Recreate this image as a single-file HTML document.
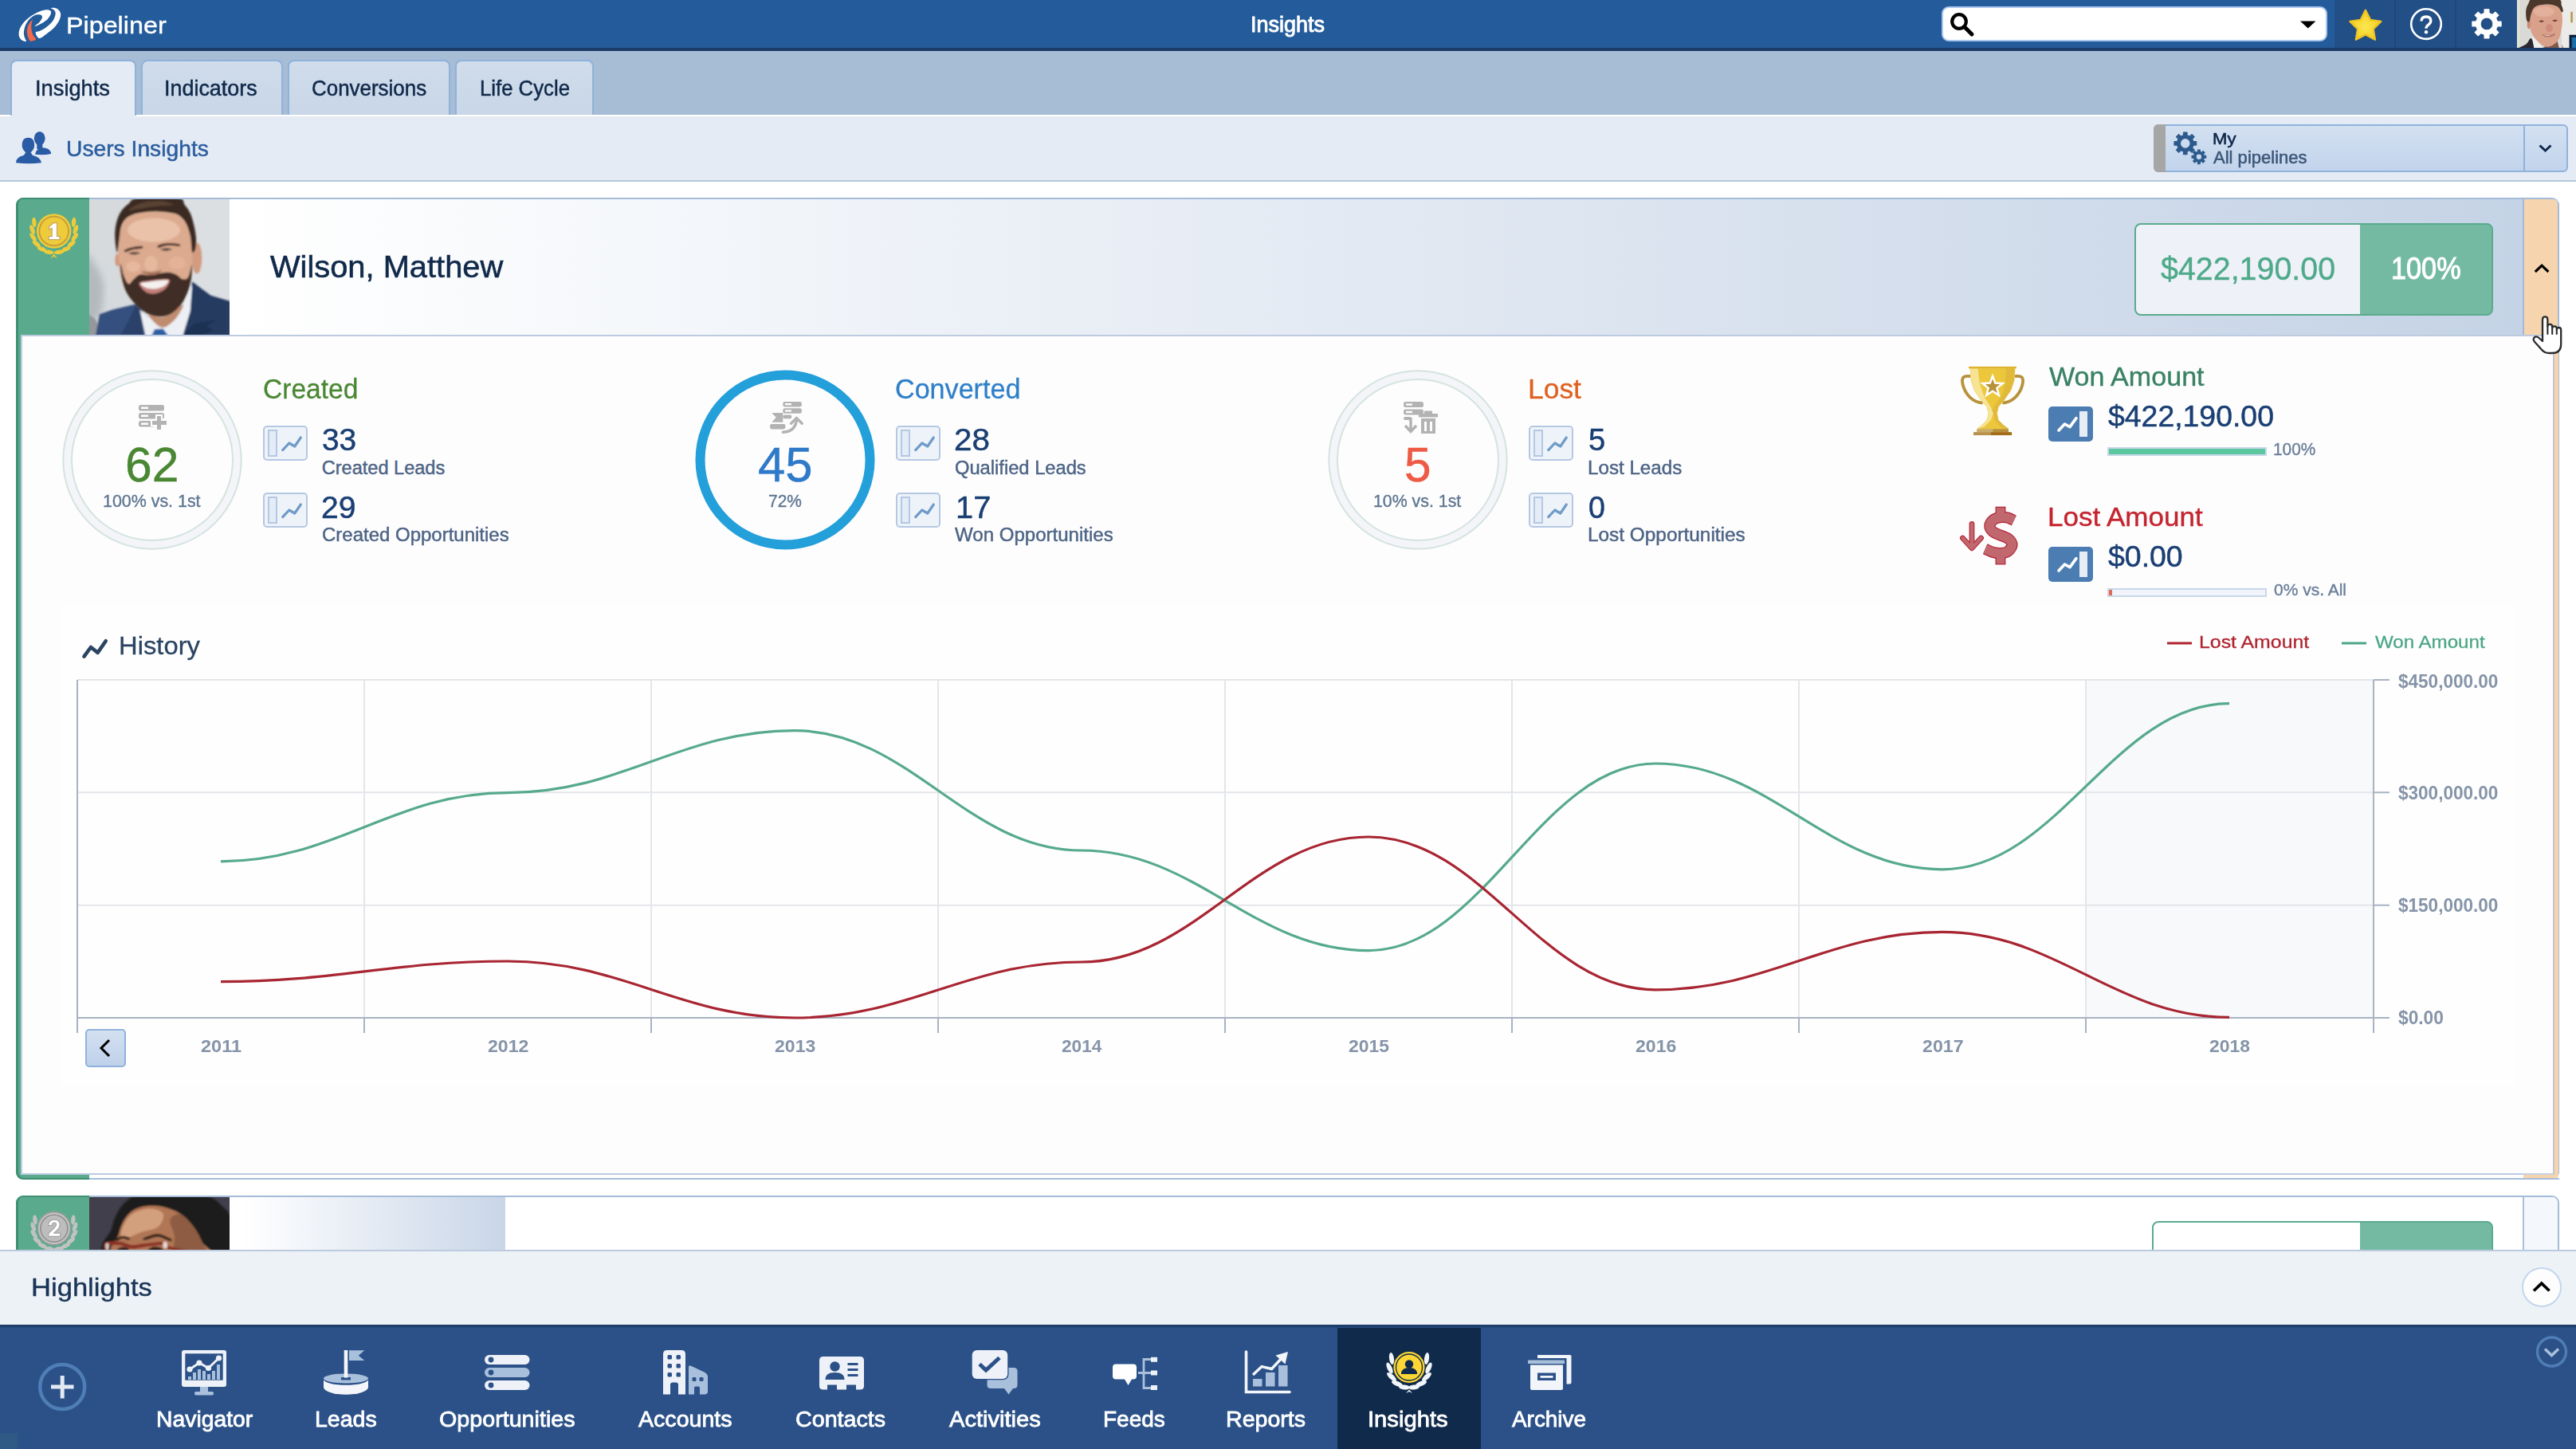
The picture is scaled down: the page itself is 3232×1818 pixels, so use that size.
<!DOCTYPE html>
<html><head><meta charset="utf-8"><title>Insights</title>
<style>
html,body{margin:0;padding:0}
body{width:3232px;height:1818px;position:relative;overflow:hidden;background:#fff;font-family:"Liberation Sans",sans-serif}
.a{position:absolute;box-sizing:border-box}
.t{position:absolute;white-space:nowrap;line-height:1;transform-origin:0 0;font-family:"Liberation Sans",sans-serif}
svg{position:absolute;overflow:visible}
.tab{position:absolute;box-sizing:border-box;top:75px;height:69px;border:2px solid #8fb2dc;border-bottom:none;border-radius:8px 8px 0 0;background:linear-gradient(#d0dcea,#c8d6e7)}
.mb{position:absolute;box-sizing:border-box;width:56px;height:44px;border:2px solid #b5c8e3;border-radius:5px;background:#eef3f9}
.mb i{position:absolute;left:4px;top:3px;width:12px;height:34px;box-sizing:border-box;border:2px solid #b5c8e3;background:#e3ecf7}
.bb{position:absolute;box-sizing:border-box;width:56px;height:44px;border-radius:5px;background:#4b7db2}
.bb i{position:absolute;left:39px;top:6px;width:10px;height:32px;background:#e6edf7}
</style></head><body>
<!-- TOP BAR -->
<div class="a" style="left:0;top:0;width:3232px;height:60px;background:#245c9b"></div>
<div class="a" style="left:2929px;top:0;width:228px;height:60px;background:#234f87"></div>
<div class="a" style="left:3004px;top:0;width:2px;height:60px;background:#1f4679"></div>
<div class="a" style="left:3080px;top:0;width:2px;height:60px;background:#1f4679"></div>
<div class="a" style="left:0;top:60px;width:3232px;height:4px;background:#1b3c69"></div>
<div class="a" style="left:2436px;top:8px;width:484px;height:44px;background:#fff;border:2px solid #a9c7ee;border-radius:9px"></div>
<!-- TAB BAR -->
<div class="a" style="left:0;top:64px;width:3232px;height:80px;background:#a7bcd5"></div>
<div class="a" style="left:0;top:144px;width:3232px;height:2px;background:#fff"></div>
<div class="a" style="left:0;top:146px;width:3232px;height:80px;background:#e5ebf4"></div>
<div class="a" style="left:0;top:226px;width:3232px;height:2px;background:#b4c6da"></div>
<div class="tab" style="left:13px;width:158px;height:70px;background:#e5ebf4"></div>
<div class="a" style="left:15px;top:142px;width:154px;height:6px;background:#e5ebf4"></div>
<div class="tab" style="left:177px;width:178px"></div>
<div class="tab" style="left:360.500px;width:204.500px"></div>
<div class="tab" style="left:570.500px;width:174.500px"></div>
<!-- FILTER DROPDOWN -->
<div class="a" style="left:2702px;top:156px;width:520px;height:60px;border:2px solid #8fb2dc;border-radius:6px;background:linear-gradient(#d3e0f1,#c2d4ec)"></div>
<div class="a" style="left:2702px;top:156px;width:15px;height:60px;background:#a6a6a6;border-radius:6px 0 0 6px"></div>
<div class="a" style="left:3166px;top:158px;width:2px;height:56px;background:#8fb2dc"></div>

<!-- CARD 1 -->
<div class="a" style="left:20px;top:248px;width:3191px;height:1232px;border:2px solid #a5bcd9;border-radius:9px;background:#fdfdfe"></div>
<div class="a" style="left:22px;top:250px;width:3187px;height:170px;background:linear-gradient(90deg,#fff 266px,#c5d3e6 3143px)"></div>
<div class="a" style="left:20px;top:248px;width:92px;height:1232px;background:#3f9072;border-radius:9px 0 0 9px"></div>
<div class="a" style="left:23px;top:250px;width:89px;height:1228px;background:#5aab8d;border-radius:6px 0 0 7px"></div>
<div class="a" style="left:26px;top:420px;width:3181px;height:1054px;background:#fdfdfe;border:2px solid #bccbe0;border-right:none"></div>
<div class="a" style="left:112px;top:1474px;width:3054px;height:4px;background:#fff"></div>
<div class="a" style="left:112px;top:1478px;width:3099px;height:2px;background:#a5bcd9"></div>
<!-- orange strip -->
<div class="a" style="left:3165px;top:250px;width:44px;height:170px;background:#f5d4ae;border-left:2px solid #a3bbd8;border-radius:0 7px 0 0"></div>
<div class="a" style="left:3165px;top:420px;width:40px;height:1054px;background:#fdfdfe;border-right:2px solid #c2c6d3;border-bottom:2px solid #c5d0e0;border-top:2px solid #bccbe0"></div>
<div class="a" style="left:3205px;top:420px;width:4.500px;height:1058px;background:#f5d4ae;border-radius:0 0 5px 0"></div>
<div class="a" style="left:3166px;top:1474px;width:43.500px;height:4px;background:#f5d4ae;border-radius:0 0 6px 0"></div>
<!-- amount box -->
<div class="a" style="left:2678px;top:280px;width:450px;height:116px;border:2.500px solid #5aab8d;border-radius:8px;background:linear-gradient(90deg,#eef2f8 281px,#74baa3 281px)"></div>

<!-- CARD 2 -->
<div class="a" style="left:20px;top:1500px;width:3191px;height:120px;border:2px solid #a5bcd9;border-radius:9px;background:#fff"></div>
<div class="a" style="left:288px;top:1502px;width:346px;height:70px;background:linear-gradient(90deg,#fff 5%,#c9d6e8)"></div>
<div class="a" style="left:20px;top:1500px;width:92px;height:120px;background:#3f9072;border-radius:9px 0 0 9px"></div>
<div class="a" style="left:23px;top:1502px;width:89px;height:118px;background:#5aab8d;border-radius:6px 0 0 7px"></div>
<div class="a" style="left:3165px;top:1502px;width:44px;height:100px;background:#f4f7fb;border-left:2px solid #a9c0dc;border-radius:0 7px 0 0"></div>
<div class="a" style="left:2700px;top:1531.500px;width:428px;height:100px;border:2.500px solid #5aab8d;border-radius:8px;background:linear-gradient(90deg,#fff 259px,#74baa3 259px)"></div>
<!-- HIGHLIGHTS BAR -->
<div class="a" style="left:0;top:1568px;width:3232px;height:94px;background:#edf2f7;border-top:2px solid #bccbde"></div>
<div class="a" style="left:3164px;top:1590px;width:50px;height:50px;border-radius:50%;background:#fdfdfe;border:2px solid #c3d6ee"></div>
<!-- NAV -->
<div class="a" style="left:0;top:1662px;width:3232px;height:156px;background:#2b5188"></div>
<div class="a" style="left:0;top:1662px;width:3232px;height:3px;background:#1e3d6b"></div>
<div class="a" style="left:0;top:1665px;width:3232px;height:1px;background:#284c80"></div>
<div class="a" style="left:1678px;top:1666px;width:180px;height:152px;background:#102a4b"></div>
<div class="a" style="left:0;top:1798px;width:22px;height:20px;background:#2f5a85"></div>
<svg style="left:0;top:0" width="3232" height="1818" viewBox="0 0 3232 1818">
<!-- highlights chevron -->
<path d="M3179,1619.500 l9.800,-9.400 l9.800,9.400" stroke="#000" stroke-width="3.700" fill="none"/>
<!-- nav collapse -->
<circle cx="3201.500" cy="1696" r="18" fill="none" stroke="#4f7db6" stroke-width="3.500"/>
<path d="M3193,1692.500 l8.500,8 l8.500,-8" stroke="#a9c0dc" stroke-width="3.500" fill="none"/>
<!-- plus -->
<circle cx="78.200" cy="1740" r="28" fill="none" stroke="#4f7db6" stroke-width="4.500"/>
<path d="M64,1740 h28.500 M78.200,1726 v28.500" stroke="#e3eaf4" stroke-width="5" fill="none"/>
<!-- Navigator : monitor x 228-284, y 1694-1750 -->
<g>
<rect x="228" y="1694" width="56" height="46" rx="3" fill="#eef2f8"/>
<rect x="232.300" y="1698.300" width="47.400" height="33.400" fill="#2b5188"/>
<g fill="#a9c0dc"><rect x="236" y="1727" width="4" height="4"/><rect x="242" y="1722" width="4" height="9"/><rect x="248" y="1718" width="4" height="13"/><rect x="254" y="1720" width="4" height="11"/><rect x="260" y="1724" width="4" height="7"/><rect x="266" y="1720" width="4" height="11"/><rect x="272" y="1712" width="4" height="19"/>
<rect x="251" y="1740" width="10" height="7"/><rect x="244" y="1746" width="24" height="4.500" rx="2"/></g>
<path d="M238,1718 l12,-8 l11.500,6.500 l13,-12.500" stroke="#eef2f8" stroke-width="3" fill="none"/>
<g fill="#eef2f8"><circle cx="238" cy="1718" r="3.600"/><circle cx="250" cy="1710" r="3.600"/><circle cx="261.500" cy="1716.500" r="3.600"/><circle cx="274.500" cy="1704" r="3.600"/></g>
</g>
<!-- Leads x 406-462 y 1694-1749 -->
<g>
<path d="M406,1732 v8.500 a28,9.200 0 0 0 56,0 v-8.500z" fill="#f4f6fb"/>
<ellipse cx="434" cy="1730.500" rx="28" ry="7.300" fill="#2b5188"/>
<ellipse cx="434" cy="1729.400" rx="28" ry="6" fill="#a9c0dc"/>
<path d="M428,1728 h12 v3.500 h-12z" fill="#2b5188"/>
<rect x="431.700" y="1694" width="4.600" height="34.500" fill="#f4f6fb"/>
<path d="M438,1694.300 h19.300 l-7.500,6.400 l7.500,6.400 h-19.300z" fill="#a9c0dc"/>
</g>
<!-- Opportunities x 608-664.5 y 1700-1744 -->
<g>
<rect x="608" y="1700" width="56.500" height="12" rx="6" fill="#eef2f8"/><rect x="608" y="1716" width="56.500" height="12" rx="6" fill="#a9c0dc"/><rect x="608" y="1732" width="56.500" height="12" rx="6" fill="#eef2f8"/>
<circle cx="616" cy="1706" r="3.400" fill="#2b5188"/><circle cx="616" cy="1722" r="3.400" fill="#2b5188"/><circle cx="616" cy="1738" r="3.400" fill="#2b5188"/>
</g>
<!-- Accounts x 832-888, y 1694-1749.5 -->
<g>
<path d="M832,1749.500 v-50.500 q0,-5 5,-5 h18 q5,0 5,5 v50.500 h-9 v-12 q0,-3 -3,-3 h-4 q-3,0 -3,3 v12z" fill="#eef2f8"/>
<g fill="#2b5188"><rect x="837.500" y="1700" width="5.500" height="5.500" rx="1.500"/><rect x="848.500" y="1700" width="5.500" height="5.500" rx="1.500"/><rect x="837.500" y="1711" width="5.500" height="5.500" rx="1.500"/><rect x="848.500" y="1711" width="5.500" height="5.500" rx="1.500"/><rect x="837.500" y="1722" width="5.500" height="5.500" rx="1.500"/><rect x="848.500" y="1722" width="5.500" height="5.500" rx="1.500"/></g>
<path d="M864,1749.500 v-34 q0,-3 3,-1.800 l17,8 q4,2 4,6 v18 q0,3.800 -4,3.800 h-6 v-8 q0,-2 -2,-2 h-3 q-2,0 -2,2 v8z" fill="#a9c0dc"/>
<g fill="#2b5188"><rect x="868.500" y="1728" width="5" height="5" rx="1.300"/><rect x="877.500" y="1728" width="5" height="5" rx="1.300"/></g>
</g>
<!-- Contacts x 1028-1084 y 1702-1743.5 -->
<g>
<path d="M1033,1702 h46 q5,0 5,5 v32 q0,4.500 -5,4.500 h-5 v-6 h-12 v6 h-12 v-6 h-12 v6 h-5 q-5,0 -5,-4.500 v-32 q0,-5 5,-5z" fill="#eef2f8"/>
<circle cx="1047.500" cy="1714.500" r="6.200" fill="#2b5188"/><path d="M1035.500,1731 q0,-9 12,-9 q12,0 12,9z" fill="#2b5188"/>
<g fill="#2b5188"><rect x="1063.500" y="1710" width="13" height="3"/><rect x="1063.500" y="1717" width="13" height="3"/><rect x="1063.500" y="1724" width="13" height="3"/></g>
</g>
<!-- Activities x 1220-1276 y 1694-1749.5 -->
<g>
<path d="M1239,1716 h33 q4.500,0 4.500,4.500 v17 q0,4.500 -4.500,4.500 h-1 l-5.500,7.500 l-5.500,-7.500 h-17 q-4.500,0 -4.500,-4.500z" fill="#a9c0dc"/>
<rect x="1218.500" y="1692.800" width="47" height="38.500" rx="7" fill="#2b5188"/><rect x="1219.700" y="1694" width="44.500" height="36" rx="6" fill="#eef2f8"/>
<path d="M1229,1711.500 l8,7.500 l17,-15.500" stroke="#2b5188" stroke-width="5" fill="none"/>
</g>
<!-- Feeds x 1396-1452 y 1703-1744 -->
<g>
<path d="M1400,1711.600 h22 q4,0 4,4 v11 q0,4 -4,4 h-2 l-4.500,7.500 l-4.500,-7.500 h-11 q-4,0 -4,-4 v-11 q0,-4 4,-4z" fill="#fff"/>
<path d="M1428,1722.500 h7 M1445,1705.500 h-10 v36 h10 M1435,1722.500 h10" stroke="#a9c0dc" stroke-width="2.800" fill="none"/>
<g fill="#eef2f8"><rect x="1444" y="1702.800" width="8" height="6"/><rect x="1444" y="1719.500" width="8" height="6"/><rect x="1444" y="1738" width="8" height="6"/></g>
</g>
<!-- Reports x 1562-1618 y 1695.500-1748 -->
<g>
<path d="M1563.500,1696 v50.500 h54.500" stroke="#f2f5fa" stroke-width="3.600" fill="none" stroke-linecap="round"/>
<g fill="#a9c0dc"><rect x="1572" y="1730" width="11.500" height="9.500"/><rect x="1588" y="1722" width="11.500" height="17.500"/><rect x="1604" y="1713" width="11.500" height="26.500"/></g>
<path d="M1572,1725 l11,-10.500 l12.500,3 l14,-15" stroke="#f2f5fa" stroke-width="3.400" fill="none"/>
<path d="M1616,1696 l-3.500,15.500 l-12,-11z" fill="#f2f5fa"/>
</g>
<!-- Insights icon : circle c(1768,1715.5) r19.5 -->
<g transform="translate(1768,1715.500)">
<g fill="#f2f5fa">
<ellipse cx="-22" cy="-11" rx="3" ry="7.500" transform="rotate(-8 -22 -11)"/><ellipse cx="-24.500" cy="1" rx="3" ry="7.500" transform="rotate(-25 -24.500 1)"/><ellipse cx="-22" cy="12" rx="3" ry="7.500" transform="rotate(-48 -22 12)"/><ellipse cx="-15" cy="20.500" rx="3" ry="7.500" transform="rotate(-68 -15 20.500)"/><ellipse cx="-6" cy="25" rx="3" ry="7" transform="rotate(-85 -6 25)"/>
<ellipse cx="22" cy="-11" rx="3" ry="7.500" transform="rotate(8 22 -11)"/><ellipse cx="24.500" cy="1" rx="3" ry="7.500" transform="rotate(25 24.500 1)"/><ellipse cx="22" cy="12" rx="3" ry="7.500" transform="rotate(48 22 12)"/><ellipse cx="15" cy="20.500" rx="3" ry="7.500" transform="rotate(68 15 20.500)"/><ellipse cx="6" cy="25" rx="3" ry="7" transform="rotate(85 6 25)"/>
<path d="M-4,32.500 l4,-4.500 l4,4.500 l-4,-2z"/>
</g>
<circle r="19.500" fill="#fbd634"/><circle r="16.500" fill="none" stroke="#102a4b" stroke-width="1.300"/>
<circle cx="0" cy="-4" r="5.200" fill="#102a4b"/><path d="M-10,8.500 q0,-8 10,-8 q10,0 10,8z" fill="#102a4b"/>
</g>
<!-- Archive x 1917-1971.5 y 1700-1744 -->
<g>
<path d="M1929,1700 h41 q1.500,0 1.500,1.500 v33 q0,2 -2,2 h-4 v-32.500 h-36.500z" fill="#f2f5fa"/>
<rect x="1917" y="1706.500" width="46" height="4.500" rx="1" fill="#a9c0dc"/>
<path d="M1920,1712.500 h41 v29.500 q0,2 -2,2 h-37 q-2,0 -2,-2z" fill="#f2f5fa"/>
<rect x="1929" y="1722.500" width="23" height="9.500" fill="#2b5188"/><rect x="1932.500" y="1726" width="16" height="2.800" fill="#f2f5fa"/>
</g>
</svg>

<!-- TOP ICONS -->
<svg style="left:0;top:0" width="3232" height="1818" viewBox="0 0 3232 1818">
<defs><radialGradient id="sg" cx="50%" cy="55%" r="55%"><stop offset="0" stop-color="#fbe84e"/><stop offset="1" stop-color="#f3cb22"/></radialGradient><filter id="b1" x="-5%" y="-5%" width="110%" height="110%"><feGaussianBlur stdDeviation="1.1"/></filter><filter id="b3" x="-20%" y="-20%" width="140%" height="140%"><feGaussianBlur stdDeviation="4"/></filter><filter id="b2" x="-5%" y="-5%" width="110%" height="110%"><feGaussianBlur stdDeviation="0.7"/></filter><clipPath id="cp1"><rect x="112" y="250" width="176" height="170"/></clipPath><clipPath id="cpa"><rect x="3158" y="0" width="74" height="60"/></clipPath><clipPath id="cp2"><rect x="112" y="1502" width="176" height="66"/></clipPath><clipPath id="cpm2"><rect x="22" y="1502" width="90" height="66"/></clipPath></defs>
<path d="M32.77,52.06 C32.02,52.31 28.67,51.38 27.18,50.20 C25.69,49.02 24.26,47.22 23.82,44.98 C23.39,42.75 23.51,39.64 24.57,36.79 C25.62,33.93 27.74,30.64 30.16,27.85 C32.58,25.05 35.87,22.26 39.10,20.02 C42.33,17.79 46.37,15.74 49.53,14.43 C52.70,13.13 55.87,12.38 58.10,12.20 C60.34,12.01 61.95,12.63 62.94,13.31 C63.94,14.00 64.25,14.99 64.06,16.30 C63.88,17.60 63.01,19.46 61.83,21.14 C60.65,22.82 59.03,24.74 56.98,26.35 C54.93,27.97 51.77,29.71 49.53,30.83 C47.30,31.94 43.57,33.56 43.57,33.06 C43.57,32.56 48.04,29.46 49.53,27.85 C51.02,26.23 51.95,24.62 52.51,23.37 C53.07,22.13 53.20,21.20 52.89,20.39 C52.57,19.59 51.64,18.87 50.65,18.53 C49.66,18.19 48.35,18.10 46.92,18.34 C45.50,18.59 43.76,19.06 42.08,20.02 C40.40,20.98 38.48,22.32 36.86,24.12 C35.25,25.92 33.51,28.47 32.39,30.83 C31.28,33.19 30.53,36.04 30.16,38.28 C29.79,40.51 29.91,42.50 30.16,44.24 C30.41,45.98 31.21,47.41 31.65,48.71 C32.08,50.01 33.51,51.81 32.77,52.06Z" fill="#fff"/>
<path d="M64.06,10.33 C64.19,9.84 67.35,9.65 68.91,9.96 C70.46,10.27 72.20,11.08 73.38,12.20 C74.56,13.31 75.61,15.05 75.99,16.67 C76.36,18.28 76.17,19.90 75.61,21.88 C75.05,23.87 74.00,26.35 72.63,28.59 C71.27,30.83 69.53,33.19 67.42,35.30 C65.30,37.41 62.94,39.15 59.96,41.26 C56.98,43.37 52.08,48.03 49.53,47.96 C46.99,47.90 44.69,42.38 44.69,40.89 C44.69,39.39 47.48,40.02 49.53,39.02 C51.58,38.03 54.62,36.54 56.98,34.92 C59.34,33.31 61.83,31.38 63.69,29.34 C65.55,27.29 67.17,24.74 68.16,22.63 C69.15,20.52 69.65,18.28 69.65,16.67 C69.65,15.05 69.09,14.00 68.16,12.94 C67.23,11.89 63.94,10.83 64.06,10.33Z" fill="#fff"/>
<path d="M40.96,24.49 C40.43,24.74 37.98,27.47 36.86,29.34 C35.75,31.20 34.75,33.68 34.26,35.67 C33.76,37.66 33.70,39.39 33.88,41.26 C34.07,43.12 34.63,45.11 35.37,46.85 C36.12,48.59 36.74,51.26 38.35,51.69 C39.97,52.12 44.44,50.57 45.06,49.45 C45.68,48.34 42.95,46.66 42.08,44.98 C41.21,43.31 40.31,41.38 39.85,39.39 C39.38,37.41 39.26,34.99 39.29,33.06 C39.32,31.14 39.75,29.27 40.03,27.85 C40.31,26.42 41.49,24.24 40.96,24.49Z" fill="#f4694a"/>
<circle cx="2458" cy="27" r="8.800" fill="none" stroke="#000" stroke-width="4.200"/><path d="M2464.500,33.500 L2474,43" stroke="#000" stroke-width="5" stroke-linecap="round"/>
<path d="M2886,26.500 h19.500 l-9.750,9z" fill="#000"/>
<path d="M2967.90,12.80 L2973.95,24.87 L2987.30,26.90 L2977.70,36.38 L2979.89,49.70 L2967.90,43.50 L2955.91,49.70 L2958.10,36.38 L2948.50,26.90 L2961.85,24.87Z" fill="url(#sg)" stroke="#eec521" stroke-width="2.400" stroke-linejoin="round"/>
<circle cx="3044" cy="30.100" r="18.800" fill="none" stroke="#fff" stroke-width="2.600"/>
<path d="M3038,26.600 q0,-5.600 5.900,-5.600 q5.900,0 5.900,5.100 q0,3 -3,5 q-2.800,1.900 -2.800,4.700" fill="none" stroke="#fff" stroke-width="3.300"/><circle cx="3044" cy="40.300" r="2.200" fill="#fff"/>
<path d="M3117.03,16.63 L3117.11,11.83 L3122.89,11.83 L3122.97,16.63 L3127.29,18.42 L3130.74,15.08 L3134.82,19.16 L3131.48,22.61 L3133.27,26.93 L3138.07,27.01 L3138.07,32.79 L3133.27,32.87 L3131.48,37.19 L3134.82,40.64 L3130.74,44.72 L3127.29,41.38 L3122.97,43.17 L3122.89,47.97 L3117.11,47.97 L3117.03,43.17 L3112.71,41.38 L3109.26,44.72 L3105.18,40.64 L3108.52,37.19 L3106.73,32.87 L3101.93,32.79 L3101.93,27.01 L3106.73,26.93 L3108.52,22.61 L3105.18,19.16 L3109.26,15.08 L3112.71,18.42Z M3112.00,29.90 a8.0,8.0 0 1,0 16.0,0 a8.0,8.0 0 1,0 -16.0,0Z" fill="#fff" fill-rule="evenodd" stroke="#fff" stroke-width="1.2" stroke-linejoin="round"/>
<path d="M2739.53,169.75 L2739.59,166.08 L2744.01,166.08 L2744.07,169.75 L2747.37,171.12 L2750.01,168.56 L2753.14,171.69 L2750.58,174.33 L2751.95,177.63 L2755.62,177.69 L2755.62,182.11 L2751.95,182.17 L2750.58,185.47 L2753.14,188.11 L2750.01,191.24 L2747.37,188.68 L2744.07,190.05 L2744.01,193.72 L2739.59,193.72 L2739.53,190.05 L2736.23,188.68 L2733.59,191.24 L2730.46,188.11 L2733.02,185.47 L2731.65,182.17 L2727.98,182.11 L2727.98,177.69 L2731.65,177.63 L2733.02,174.33 L2730.46,171.69 L2733.59,168.56 L2736.23,171.12Z M2735.40,179.90 a6.4,6.4 0 1,0 12.8,0 a6.4,6.4 0 1,0 -12.8,0Z" fill="#2d5a8c" fill-rule="evenodd" stroke="#2d5a8c" stroke-width="1.2" stroke-linejoin="round"/>
<path d="M2757.48,190.46 L2757.50,188.01 L2760.30,188.01 L2760.32,190.46 L2762.38,191.31 L2764.12,189.59 L2766.11,191.58 L2764.39,193.32 L2765.24,195.38 L2767.69,195.40 L2767.69,198.20 L2765.24,198.22 L2764.39,200.28 L2766.11,202.02 L2764.12,204.01 L2762.38,202.29 L2760.32,203.14 L2760.30,205.59 L2757.50,205.59 L2757.48,203.14 L2755.42,202.29 L2753.68,204.01 L2751.69,202.02 L2753.41,200.28 L2752.56,198.22 L2750.11,198.20 L2750.11,195.40 L2752.56,195.38 L2753.41,193.32 L2751.69,191.58 L2753.68,189.59 L2755.42,191.31Z M2755.10,196.80 a3.8,3.8 0 1,0 7.6,0 a3.8,3.8 0 1,0 -7.6,0Z" fill="#2d5a8c" fill-rule="evenodd" stroke="#2d5a8c" stroke-width="1.2" stroke-linejoin="round"/>
<path d="M3186.500,182.500 l7,6.500 l7,-6.500" stroke="#10294a" stroke-width="3" fill="none"/>
<path d="M3180.800,341 l8.300,-7.800 l8.300,7.800" stroke="#000" stroke-width="3.100" fill="none"/>
<g fill="#2a5ca6"><ellipse cx="49.700" cy="173.600" rx="6.900" ry="8.600"/><rect x="46.300" y="179" width="7" height="8"/><path d="M44,193.800 q1,-7.600 9,-8.600 q9.500,0.600 11,6.200 v1.500 q-8,2 -20,0.900z"/><g stroke="#e5ebf4" stroke-width="1.800" paint-order="stroke"><path d="M20,204.300 q0,-7.500 10,-9.600 l2.200,-3.500 q-4.600,-4.200 -4.600,-9 q0,-9.400 7.800,-9.400 q7.800,0 7.800,9.400 q0,4.800 -4.600,9 l2.200,3.500 q10,2.100 11.200,9.600 q-16,2 -32,0z"/></g></g>
<g clip-path="url(#cpa)"><rect x="3158" y="0" width="74" height="60" fill="#d9dad6"/><rect x="3158" y="0" width="3" height="60" fill="#e8e4d4"/><rect x="3214" y="0" width="18" height="60" fill="#ecebe8"/><g filter="url(#b2)">
<rect x="3225.3" y="14.6" width="2.600" height="14" rx="1.300" fill="#b59a55"/>
<path d="M3223.55,43.73 L3232.83,43.73 L3232.83,61.84 L3223.55,61.84Z" fill="#0e1e36"/><path d="M3226.65,46.82 L3232.83,46.82 L3232.83,61.84 L3226.65,61.84Z" fill="#1c6ea8"/>
<path d="M3158.63,61.84 C3156.86,60.73 3166.80,57.49 3169.67,55.21 C3172.54,52.93 3174.08,47.04 3175.85,48.14 C3177.62,49.25 3183.14,59.56 3180.27,61.84 C3177.40,64.12 3160.39,62.94 3158.63,61.84Z" fill="#2a2730"/>
<path d="M3176.51,45.94 L3179.61,61.84 L3191.75,61.84 L3182.92,50.80Z" fill="#f1eff0"/>
<path d="M3207.21,50.80 C3210.45,51.68 3218.33,60.00 3215.60,61.84 C3212.88,63.68 3194.11,62.72 3190.87,61.84 C3187.63,60.95 3193.45,58.38 3196.17,56.54 C3198.89,54.70 3203.97,49.91 3207.21,50.80Z" fill="#7d5a4c"/>
<path d="M3208.54,50.80 L3211.19,61.84 L3215.60,61.84 L3212.95,54.33Z" fill="#e6dedb"/>
<path d="M3173.20,26.50 C3173.42,23.93 3174.38,20.47 3175.41,17.67 C3176.44,14.87 3177.40,11.63 3179.39,9.72 C3181.37,7.80 3183.80,6.85 3187.34,6.18 C3190.87,5.52 3196.91,5.30 3200.59,5.74 C3204.27,6.18 3207.21,7.36 3209.42,8.83 C3211.63,10.31 3212.92,11.63 3213.84,14.58 C3214.76,17.52 3215.05,22.31 3214.94,26.50 C3214.83,30.70 3214.10,35.70 3213.17,39.75 C3212.25,43.80 3211.52,47.78 3209.42,50.80 C3207.32,53.81 3203.53,56.68 3200.59,57.86 C3197.64,59.04 3194.70,59.04 3191.75,57.86 C3188.81,56.68 3185.42,53.45 3182.92,50.80 C3180.42,48.14 3178.21,44.91 3176.73,41.96 C3175.26,39.02 3174.67,35.70 3174.08,33.13 C3173.50,30.55 3172.98,29.08 3173.20,26.50Z" fill="#d9a08a"/>
<ellipse cx="3191.8" cy="14.6" rx="13" ry="6.500" fill="#e3b09b"/>
<ellipse cx="3172.8" cy="30.5" rx="2.200" ry="6" fill="#c98d78"/>
<path d="M3170.11,25.18 C3169.41,22.89 3168.86,16.71 3169.23,13.25 C3169.59,9.79 3170.77,6.85 3172.32,4.42 C3173.86,1.99 3172.32,-0.37 3178.50,-1.33 C3184.69,-2.28 3203.53,-2.65 3209.42,-1.33 C3215.31,0.00 3212.77,4.20 3213.84,6.63 C3214.90,9.05 3215.79,11.85 3215.83,13.25 C3215.86,14.65 3215.13,15.75 3214.06,15.02 C3212.99,14.28 3211.67,10.38 3209.42,8.83 C3207.18,7.29 3204.27,6.18 3200.59,5.74 C3196.91,5.30 3190.87,5.52 3187.34,6.18 C3183.80,6.85 3181.34,7.80 3179.39,9.72 C3177.43,11.63 3176.62,14.80 3175.63,17.67 C3174.64,20.54 3174.34,25.69 3173.42,26.94 C3172.50,28.19 3170.81,27.46 3170.11,25.18Z" fill="#4b372c"/>
<path d="M3185.57,26.50 C3185.57,26.06 3187.63,25.40 3188.66,25.40 C3189.69,25.40 3191.75,26.06 3191.75,26.50 C3191.75,26.94 3189.69,28.05 3188.66,28.05 C3187.63,28.05 3185.57,26.94 3185.57,26.50Z" fill="#6a4638"/><path d="M3202.35,25.84 C3202.35,25.43 3204.34,24.77 3205.45,24.73 C3206.55,24.70 3208.98,25.21 3208.98,25.62 C3208.98,26.02 3206.55,27.13 3205.45,27.16 C3204.34,27.20 3202.35,26.24 3202.35,25.84Z" fill="#6a4638"/>
<ellipse cx="3198.4" cy="35.3" rx="4.500" ry="5" fill="#cf8c7c"/>
<path d="M3189.54,43.07 C3190.28,42.77 3193.52,43.84 3196.17,43.73 C3198.82,43.62 3204.34,42.11 3205.45,42.40 C3206.55,42.70 3204.34,44.83 3202.80,45.49 C3201.25,46.16 3198.01,46.38 3196.17,46.38 C3194.33,46.38 3192.86,46.05 3191.75,45.49 C3190.65,44.94 3188.81,43.36 3189.54,43.07Z" fill="#b57768"/><path d="M3191.75,43.73 C3191.75,43.58 3194.26,44.15 3196.17,44.08 C3198.08,44.01 3203.24,43.14 3203.24,43.29 C3203.24,43.43 3198.08,44.89 3196.17,44.96 C3194.26,45.04 3191.75,43.88 3191.75,43.73Z" fill="#ead9d2"/>
</g></g>
<ellipse cx="42.85" cy="278.84" rx="2.7" ry="6.2" transform="rotate(-5.0 42.85 278.84)" fill="#eecb3a"/><ellipse cx="40.56" cy="288.05" rx="2.7" ry="6.2" transform="rotate(-20.7 40.56 288.05)" fill="#eecb3a"/><ellipse cx="41.58" cy="297.49" rx="2.7" ry="6.2" transform="rotate(-36.4 41.58 297.49)" fill="#eecb3a"/><ellipse cx="45.78" cy="306.00" rx="2.7" ry="6.2" transform="rotate(-52.0 45.78 306.00)" fill="#eecb3a"/><ellipse cx="52.65" cy="312.56" rx="2.7" ry="6.2" transform="rotate(-67.7 52.65 312.56)" fill="#eecb3a"/><ellipse cx="61.35" cy="316.35" rx="2.7" ry="6.2" transform="rotate(-83.4 61.35 316.35)" fill="#eecb3a"/><ellipse cx="92.55" cy="278.84" rx="2.7" ry="6.2" transform="rotate(5.0 92.55 278.84)" fill="#eecb3a"/><ellipse cx="94.84" cy="288.05" rx="2.7" ry="6.2" transform="rotate(20.7 94.84 288.05)" fill="#eecb3a"/><ellipse cx="93.82" cy="297.49" rx="2.7" ry="6.2" transform="rotate(36.4 93.82 297.49)" fill="#eecb3a"/><ellipse cx="89.62" cy="306.00" rx="2.7" ry="6.2" transform="rotate(52.0 89.62 306.00)" fill="#eecb3a"/><ellipse cx="82.75" cy="312.56" rx="2.7" ry="6.2" transform="rotate(67.7 82.75 312.56)" fill="#eecb3a"/><ellipse cx="74.05" cy="316.35" rx="2.7" ry="6.2" transform="rotate(83.4 74.05 316.35)" fill="#eecb3a"/><path d="M63.5,324.29999999999995 l4.200,-6 l4.200,6 l-4.200,-2.600z" fill="#eecb3a"/>
<circle cx="67.700" cy="289.900" r="21.700" fill="#eecb3a"/><circle cx="67.700" cy="289.900" r="18.300" fill="none" stroke="#c29a3a" stroke-width="1.700"/>
<path d="M61.500,284.500 l5.500,-4.800 h4.500 v17 h3.600 v4 h-14 v-4 h4 v-10.500 l-3.600,2z" fill="#fff" stroke="#c7a763" stroke-width="1.300" stroke-linejoin="round"/>
<g clip-path="url(#cp1)"><rect x="112" y="250" width="176" height="170" fill="#d6dadd"/><rect x="230" y="250" width="58" height="170" fill="#dcdfe2"/><path d="M107.31,325.09 C109.26,309.45 115.32,327.05 119.04,332.13 C122.76,337.21 128.23,345.82 129.60,355.60 C130.97,365.37 129.01,382.97 127.25,390.80 C125.49,398.62 122.36,396.66 119.04,402.53 C115.72,408.39 109.26,438.90 107.31,425.99 C105.35,413.09 105.35,340.73 107.31,325.09Z" fill="#b4b9be" filter="url(#b3)"/><path d="M107.31,396.66 C109.26,392.36 116.11,397.25 119.04,400.18 C121.97,403.12 124.52,409.96 124.91,414.26 C125.30,418.56 124.32,424.04 121.39,425.99 C118.45,427.95 109.65,430.88 107.31,425.99 C104.96,421.11 105.35,400.96 107.31,396.66Z" fill="#94989c" filter="url(#b1)"/><g filter="url(#b1)">
<path d="M120.21,421.30 L124.91,394.32 L141.33,388.45 L170.66,381.41 L178.88,390.80 L183.57,421.30Z" fill="#34507e"/>
<path d="M150.72,421.30 L161.28,402.53 L170.66,382.58 L178.88,390.80 L183.57,421.30Z" fill="#2a426b"/>
<path d="M210.56,421.30 L229.33,396.66 L239.89,373.20 L241.06,353.25 L264.53,370.85 L289.17,377.89 L289.17,421.30Z" fill="#263b61"/>
<path d="M229.33,421.30 L243.41,406.05 L271.57,401.36 L258.66,409.57 L268.05,414.26 L252.80,421.30Z" fill="#1f3152"/>
<path d="M175.36,388.45 L182.40,421.30 L229.33,421.30 L238.72,390.80 L241.06,357.94 L229.33,384.93 L205.86,402.53 L184.74,397.84Z" fill="#eceff4"/>
<path d="M190.02,421.30 L194.13,413.09 L204.69,412.50 L211.14,421.30Z" fill="#2f5fa3"/>
<path d="M187.09,394.32 C189.05,393.14 198.82,399.79 205.86,397.84 C212.90,395.88 226.79,382.39 229.33,382.58 C231.87,382.78 225.03,394.32 221.12,399.01 C217.21,403.70 210.36,409.76 205.86,410.74 C201.37,411.72 197.26,407.61 194.13,404.88 C191.00,402.14 185.14,395.49 187.09,394.32Z" fill="#c08c70"/>
<ellipse cx="246.9" cy="323.9" rx="6.500" ry="19.500" fill="#d39b80"/>
<ellipse cx="147.4" cy="326.3" rx="3" ry="8" fill="#cf977c"/>
<path d="M148.37,315.70 C148.37,310.23 148.86,304.56 149.55,299.28 C150.23,294.00 150.91,288.33 152.48,284.03 C154.04,279.72 155.51,276.20 158.93,273.47 C162.35,270.73 167.14,268.97 173.01,267.60 C178.88,266.23 186.70,265.25 194.13,265.25 C201.56,265.25 212.02,266.33 217.60,267.60 C223.17,268.87 224.73,270.43 227.57,272.88 C230.41,275.32 232.65,278.26 234.61,282.27 C236.56,286.27 238.23,291.36 239.30,296.93 C240.38,302.50 240.87,308.86 241.06,315.70 C241.26,322.55 241.26,330.37 240.48,338.00 C239.69,345.62 238.62,354.03 236.37,361.46 C234.12,368.89 230.50,377.30 226.98,382.58 C223.46,387.86 219.55,390.70 215.25,393.14 C210.95,395.59 206.25,397.25 201.17,397.25 C196.09,397.25 189.83,395.59 184.74,393.14 C179.66,390.70 174.97,386.88 170.66,382.58 C166.36,378.28 161.96,372.80 158.93,367.33 C155.90,361.85 154.04,355.60 152.48,349.73 C150.91,343.86 150.23,337.80 149.55,332.13 C148.86,326.46 148.37,321.18 148.37,315.70Z" fill="#dcaa8e"/>
<ellipse cx="193.0" cy="288.7" rx="33" ry="15" fill="#e9c2a9"/>
<ellipse cx="167.1" cy="334.5" rx="9" ry="7" fill="#e6b89e"/><ellipse cx="222.3" cy="329.8" rx="11" ry="8" fill="#e3b297"/>
<path d="M146.96,316.88 C146.05,316.49 144.42,303.19 144.27,296.93 C144.11,290.67 144.75,284.61 146.03,279.33 C147.30,274.05 149.35,269.16 151.89,265.25 C154.43,261.34 157.76,258.60 161.28,255.87 C164.80,253.13 162.65,250.00 173.01,248.83 C183.38,247.65 213.69,247.46 223.46,248.83 C233.24,250.20 229.13,253.91 231.68,257.04 C234.22,260.17 236.76,263.30 238.72,267.60 C240.67,271.90 242.20,277.57 243.41,282.85 C244.62,288.13 245.70,294.39 245.99,299.28 C246.28,304.17 245.99,309.35 245.17,312.18 C244.35,315.02 242.10,318.83 241.06,316.29 C240.03,313.75 240.08,302.66 238.95,296.93 C237.82,291.20 236.21,285.98 234.26,281.91 C232.30,277.85 229.99,274.91 227.22,272.53 C224.44,270.14 223.11,268.81 217.60,267.60 C212.08,266.39 201.56,265.25 194.13,265.25 C186.70,265.25 178.88,266.23 173.01,267.60 C167.14,268.97 162.41,270.73 158.93,273.47 C155.45,276.20 153.65,279.72 152.13,284.03 C150.60,288.33 150.64,293.80 149.78,299.28 C148.92,304.75 147.88,317.27 146.96,316.88Z" fill="#3b2a22"/>
<path d="M161.28,264.08 C160.50,263.10 171.06,256.65 177.70,254.69 C184.35,252.74 194.52,251.96 201.17,252.35 C207.82,252.74 217.60,256.06 217.60,257.04 C217.60,258.02 207.04,257.63 201.17,258.21 C195.30,258.80 189.05,259.58 182.40,260.56 C175.75,261.54 162.06,265.06 161.28,264.08Z" fill="#5a4233"/>
<path d="M150.72,332.13 C150.82,334.67 151.70,343.86 153.07,349.73 C154.43,355.60 156.00,361.85 158.93,367.33 C161.87,372.80 166.36,378.28 170.66,382.58 C174.97,386.88 179.66,390.70 184.74,393.14 C189.83,395.59 196.09,397.25 201.17,397.25 C206.25,397.25 210.95,395.59 215.25,393.14 C219.55,390.70 223.66,386.88 226.98,382.58 C230.31,378.28 233.05,372.80 235.20,367.33 C237.35,361.85 238.95,355.60 239.89,349.73 C240.83,343.86 241.41,332.52 240.83,332.13 C240.24,331.74 238.29,344.35 236.37,347.38 C234.45,350.41 231.87,350.81 229.33,350.32 C226.79,349.83 224.05,345.88 221.12,344.45 C218.18,343.02 215.05,342.05 211.73,341.75 C208.41,341.46 205.28,342.10 201.17,342.69 C197.06,343.28 191.39,344.98 187.09,345.27 C182.79,345.56 178.68,343.51 175.36,344.45 C172.03,345.39 169.49,348.95 167.14,350.90 C164.80,352.86 163.23,356.97 161.28,356.18 C159.32,355.40 156.88,349.83 155.41,346.21 C153.95,342.59 153.26,336.82 152.48,334.48 C151.70,332.13 150.62,329.59 150.72,332.13Z" fill="#3f2d26"/>
<path d="M174.77,355.01 C175.94,352.86 183.08,352.86 188.26,352.08 C193.45,351.29 201.76,350.36 205.86,350.32 C209.97,350.28 212.51,349.98 212.90,351.84 C213.29,353.70 210.56,358.88 208.21,361.46 C205.86,364.04 201.95,366.16 198.82,367.33 C195.70,368.50 192.37,368.89 189.44,368.50 C186.50,368.11 183.67,367.23 181.22,364.98 C178.78,362.73 173.60,357.16 174.77,355.01Z" fill="#c47f78"/>
<path d="M176.53,355.60 C177.51,354.38 183.38,354.15 188.26,353.48 C193.15,352.82 201.99,351.80 205.86,351.61 C209.74,351.41 211.50,351.06 211.50,352.31 C211.50,353.56 208.76,357.43 205.86,359.12 C202.97,360.80 198.04,362.13 194.13,362.40 C190.22,362.68 185.33,361.89 182.40,360.76 C179.46,359.62 175.55,356.81 176.53,355.60Z" fill="#f4f1ef"/>
<path d="M177.12,340.34 C176.73,340.83 180.25,343.04 182.40,343.86 C184.55,344.68 187.48,345.31 190.02,345.27 C192.57,345.23 195.50,344.65 197.65,343.63 C199.80,342.61 203.52,339.62 202.93,339.17 C202.34,338.72 197.16,340.64 194.13,340.93 C191.10,341.22 187.58,341.03 184.74,340.93 C181.91,340.83 177.51,339.85 177.12,340.34Z" fill="#a9745c"/>
<ellipse cx="189.4" cy="331.0" rx="8" ry="10" fill="#e6b99f"/>
<path d="M156.00,313.94 C157.17,312.97 161.18,311.30 164.80,310.42 C168.42,309.54 175.46,308.47 177.70,308.66 C179.95,308.86 180.25,310.82 178.29,311.60 C176.34,312.38 169.39,312.58 165.97,313.36 C162.55,314.14 159.42,316.19 157.76,316.29 C156.10,316.39 154.83,314.92 156.00,313.94Z" fill="#3f2c25"/>
<path d="M198.24,308.08 C199.70,307.10 204.01,305.48 208.21,305.14 C212.41,304.81 220.63,305.50 223.46,306.08 C226.30,306.67 227.57,308.33 225.22,308.66 C222.88,309.00 213.69,307.69 209.38,308.08 C205.08,308.47 201.27,311.01 199.41,311.01 C197.55,311.01 196.77,309.06 198.24,308.08Z" fill="#3f2c25"/>
<path d="M161.28,318.05 C161.28,317.46 165.87,316.04 168.32,315.94 C170.76,315.84 175.94,316.88 175.94,317.46 C175.94,318.05 170.76,319.36 168.32,319.46 C165.87,319.56 161.28,318.64 161.28,318.05Z" fill="#5d4a44"/><path d="M201.17,313.36 C201.17,312.77 205.77,311.34 208.21,311.25 C210.65,311.15 215.84,312.18 215.84,312.77 C215.84,313.36 210.65,314.67 208.21,314.77 C205.77,314.86 201.17,313.94 201.17,313.36Z" fill="#5d4a44"/>
</g></g>
<g clip-path="url(#cp2)"><rect x="112" y="1502" width="176" height="66" fill="#413f4b"/><g filter="url(#b1)">
<path d="M138.48,1574.09 C113.57,1568.65 138.48,1550.54 140.11,1541.48 C141.74,1532.42 145.09,1525.54 148.26,1519.74 C151.43,1513.94 155.14,1509.96 159.13,1506.70 C163.12,1503.43 162.75,1501.99 172.17,1500.17 C181.59,1498.36 201.16,1495.83 215.65,1495.83 C230.14,1495.83 248.44,1497.09 259.13,1500.17 C269.82,1503.25 274.71,1509.23 279.78,1514.30 C284.86,1519.38 287.93,1520.64 289.57,1530.61 C291.20,1540.57 314.75,1566.84 289.57,1574.09 C264.38,1581.33 163.39,1579.52 138.48,1574.09Z" fill="#1e1a1a"/>
<path d="M146.63,1574.09 C128.57,1569.74 147.59,1555.25 149.13,1548.00 C150.67,1540.75 152.93,1535.50 155.87,1530.61 C158.80,1525.72 162.21,1521.55 166.74,1518.65 C171.27,1515.75 176.70,1513.94 183.04,1513.22 C189.38,1512.49 197.54,1512.67 204.78,1514.30 C212.03,1515.93 220.18,1518.83 226.52,1523.00 C232.86,1527.17 238.30,1533.33 242.83,1539.30 C247.36,1545.28 251.25,1553.07 253.70,1558.87 C256.14,1564.67 275.34,1571.55 257.50,1574.09 C239.66,1576.62 164.69,1578.43 146.63,1574.09Z" fill="#b07654"/>
<path d="M151.52,1550.17 C150.98,1546.73 154.96,1536.59 158.04,1531.70 C161.12,1526.80 164.75,1523.36 170.00,1520.83 C175.25,1518.29 183.77,1516.12 189.57,1516.48 C195.36,1516.84 203.33,1519.20 204.78,1523.00 C206.23,1526.80 202.79,1535.50 198.26,1539.30 C193.73,1543.11 183.77,1543.65 177.61,1545.83 C171.45,1548.00 165.65,1551.62 161.30,1552.35 C156.96,1553.07 152.07,1553.62 151.52,1550.17Z" fill="#d3a07e"/>
<path d="M221.09,1574.09 C214.66,1570.10 220.18,1557.42 218.91,1550.17 C217.64,1542.93 212.21,1535.05 213.48,1530.61 C214.75,1526.17 221.63,1522.09 226.52,1523.54 C231.41,1524.99 238.30,1533.42 242.83,1539.30 C247.36,1545.19 251.25,1553.07 253.70,1558.87 C256.14,1564.67 262.93,1571.55 257.50,1574.09 C252.07,1576.62 227.52,1578.07 221.09,1574.09Z" fill="#8d5c42"/>
<path d="M145.00,1554.52 C146.27,1553.43 150.80,1550.99 153.70,1550.72 C156.59,1550.45 161.03,1552.08 162.39,1552.89 C163.75,1553.71 163.30,1555.48 161.85,1555.61 C160.40,1555.74 156.32,1553.38 153.70,1553.65 C151.07,1553.92 147.54,1557.09 146.09,1557.24 C144.64,1557.38 143.73,1555.61 145.00,1554.52Z" fill="#2a1b16"/>
<path d="M180.87,1552.89 C183.59,1551.62 192.64,1547.95 198.26,1548.22 C203.88,1548.49 212.03,1553.02 214.57,1554.52 C217.10,1556.03 216.20,1557.69 213.48,1557.24 C210.76,1556.79 203.51,1552.04 198.26,1551.80 C193.01,1551.57 184.86,1555.64 181.96,1555.83 C179.06,1556.01 178.15,1554.16 180.87,1552.89Z" fill="#2a1b16"/>
<path d="M131.96,1559.41 C135.13,1556.73 144.82,1557.55 150.43,1558.00 C156.05,1558.45 160.58,1561.77 165.65,1562.13 C170.72,1562.49 173.99,1560.86 180.87,1560.17 C187.75,1559.49 201.88,1557.49 206.96,1558.00 C212.03,1558.51 205.87,1561.26 211.30,1563.22 C216.74,1565.17 235.04,1567.93 239.57,1569.74 C244.09,1571.55 243.55,1574.63 238.48,1574.09 C233.41,1573.54 214.75,1568.47 209.13,1566.48 C203.51,1564.49 209.49,1562.46 204.78,1562.13 C200.07,1561.80 187.39,1563.76 180.87,1564.52 C174.35,1565.28 170.72,1567.06 165.65,1566.70 C160.58,1566.33 155.51,1562.89 150.43,1562.35 C145.36,1561.80 137.93,1561.48 135.22,1563.43 C132.50,1565.39 134.76,1572.31 134.13,1574.09 C133.50,1575.86 131.78,1576.53 131.41,1574.09 C131.05,1571.64 128.79,1562.09 131.96,1559.41Z" fill="#8a2d24"/>
<path d="M204.78,1558.87 C205.42,1557.78 208.32,1557.78 209.13,1558.87 C209.95,1559.96 210.31,1564.30 209.67,1565.39 C209.04,1566.48 206.14,1566.48 205.33,1565.39 C204.51,1564.30 204.15,1559.96 204.78,1558.87Z" fill="#e8dcd8"/><path d="M132.50,1560.50 C133.04,1559.27 135.67,1559.00 136.30,1560.17 C136.94,1561.35 136.85,1566.33 136.30,1567.57 C135.76,1568.80 133.68,1568.74 133.04,1567.57 C132.41,1566.39 131.96,1561.73 132.50,1560.50Z" fill="#d8c8c4"/>
<path d="M147.17,1567.57 C148.26,1565.97 151.34,1564.70 153.70,1564.52 C156.05,1564.34 160.04,1564.88 161.30,1566.48 C162.57,1568.07 163.66,1572.82 161.30,1574.09 C158.95,1575.36 149.53,1575.17 147.17,1574.09 C144.82,1573.00 146.09,1569.16 147.17,1567.57Z" fill="#3a2520"/><path d="M186.30,1567.57 C187.57,1565.90 191.01,1564.23 193.91,1564.09 C196.81,1563.94 202.07,1565.03 203.70,1566.70 C205.33,1568.36 206.59,1572.86 203.70,1574.09 C200.80,1575.32 189.20,1575.17 186.30,1574.09 C183.41,1573.00 185.04,1569.23 186.30,1567.57Z" fill="#35221d"/>
</g></g>
<g clip-path="url(#cpm2)">
<ellipse cx="43.97" cy="1530.54" rx="2.7" ry="6.2" transform="rotate(-5.0 43.97 1530.54)" fill="#c2c2c2"/><ellipse cx="41.76" cy="1539.42" rx="2.7" ry="6.2" transform="rotate(-20.7 41.76 1539.42)" fill="#c2c2c2"/><ellipse cx="42.74" cy="1548.51" rx="2.7" ry="6.2" transform="rotate(-36.4 42.74 1548.51)" fill="#c2c2c2"/><ellipse cx="46.78" cy="1556.71" rx="2.7" ry="6.2" transform="rotate(-52.0 46.78 1556.71)" fill="#c2c2c2"/><ellipse cx="53.40" cy="1563.02" rx="2.7" ry="6.2" transform="rotate(-67.7 53.40 1563.02)" fill="#c2c2c2"/><ellipse cx="61.78" cy="1566.68" rx="2.7" ry="6.2" transform="rotate(-83.4 61.78 1566.68)" fill="#c2c2c2"/><ellipse cx="91.83" cy="1530.54" rx="2.7" ry="6.2" transform="rotate(5.0 91.83 1530.54)" fill="#c2c2c2"/><ellipse cx="94.04" cy="1539.42" rx="2.7" ry="6.2" transform="rotate(20.7 94.04 1539.42)" fill="#c2c2c2"/><ellipse cx="93.06" cy="1548.51" rx="2.7" ry="6.2" transform="rotate(36.4 93.06 1548.51)" fill="#c2c2c2"/><ellipse cx="89.02" cy="1556.71" rx="2.7" ry="6.2" transform="rotate(52.0 89.02 1556.71)" fill="#c2c2c2"/><ellipse cx="82.40" cy="1563.02" rx="2.7" ry="6.2" transform="rotate(67.7 82.40 1563.02)" fill="#c2c2c2"/><ellipse cx="74.02" cy="1566.68" rx="2.7" ry="6.2" transform="rotate(83.4 74.02 1566.68)" fill="#c2c2c2"/><path d="M63.7,1574.6000000000001 l4.200,-6 l4.200,6 l-4.200,-2.600z" fill="#c2c2c2"/>
<circle cx="67.900" cy="1541.200" r="20.600" fill="#c4c4c4" stroke="#9b9b9b" stroke-width="1.600"/><circle cx="67.900" cy="1541.200" r="17" fill="#bdbdbd" stroke="#8f8f8f" stroke-width="1.600"/>
<path d="M60.800,1537.500 q0,-7.300 7.300,-7.300 q7.100,0 7.100,6.300 q0,3.600 -3.300,6.600 l-4.300,4 h8 v4.300 h-14.800 v-3.800 l7.500,-7.300 q2.300,-2.300 2.300,-4 q0,-2.300 -2.500,-2.300 q-2.700,0 -2.700,3.500z" fill="#fff" stroke="#a3a3a3" stroke-width="1.200" stroke-linejoin="round"/>
</g>
<path d="M3190,428 V401 q0,-3.600 3.200,-3.600 q3.200,0 3.200,3.600 V409 q0.400,-2.200 2.900,-2.200 q2.900,0 2.900,3 V411.500 q0.400,-2.200 2.800,-2.200 q2.800,0 2.800,2.800 V413.300 q0.400,-2.300 2.700,-2.300 q2.700,0 2.700,3 V432 q0,11 -11,11 h-4 q-5.500,0 -9,-4 l-9,-10 q-2.800,-3.200 -0.500,-5.600 q2.600,-2.300 5.800,0.600z" fill="#fff" stroke="#2b2b2b" stroke-width="2.300" stroke-linejoin="round"/>
<path d="M3196.400,409 V419 M3202.200,411.500 V419 M3207.800,413.300 V419" fill="none" stroke="#2b2b2b" stroke-width="2.100" stroke-linecap="round"/>
</svg>

<!-- STATS -->
<div class="mb" style="left:330px;top:534px"><i></i></div>
<div class="mb" style="left:330px;top:618px"><i></i></div>
<div class="mb" style="left:1124px;top:534px"><i></i></div>
<div class="mb" style="left:1124px;top:618px"><i></i></div>
<div class="mb" style="left:1918px;top:534px"><i></i></div>
<div class="mb" style="left:1918px;top:618px"><i></i></div>
<div class="bb" style="left:2570px;top:510px"><i></i></div>
<div class="bb" style="left:2570px;top:686px"><i></i></div>
<svg style="left:0;top:0" width="3232" height="1818" viewBox="0 0 3232 1818">
<circle cx="191" cy="577" r="106.5" fill="none" stroke="#f3f5f9" stroke-width="11"/><circle cx="191" cy="577" r="111.7" fill="none" stroke="#d5e3de" stroke-width="2"/><circle cx="191" cy="577" r="101" fill="none" stroke="#d5e3de" stroke-width="2"/>
<circle cx="985" cy="577" r="106.5" fill="none" stroke="#239fda" stroke-width="12"/>
<circle cx="1779" cy="577" r="106.5" fill="none" stroke="#f3f5f9" stroke-width="11"/><circle cx="1779" cy="577" r="111.7" fill="none" stroke="#d5e3de" stroke-width="2"/><circle cx="1779" cy="577" r="101" fill="none" stroke="#d5e3de" stroke-width="2"/>
<g fill="#b3b3b3"><rect x="174" y="508" width="32" height="7.5" rx="2.5"/><rect x="174" y="518" width="32" height="7.5" rx="2.5"/><rect x="174" y="528" width="20" height="7.5" rx="2.5"/><rect x="196" y="521" width="7" height="19" stroke="#fdfdfe" stroke-width="2"/><rect x="190" y="527" width="20" height="7" stroke="#fdfdfe" stroke-width="2"/><rect x="197" y="522" width="5" height="17"/><rect x="191" y="528" width="18" height="5"/></g><g fill="#fdfdfe"><rect x="177" y="510.5" width="9" height="2.5"/><rect x="177" y="520.5" width="9" height="2.5"/><rect x="177" y="530.5" width="9" height="2.5"/></g>
<g fill="#b3b3b3"><rect x="982.300" y="504" width="23.600" height="6.400" rx="2.300"/><rect x="982.300" y="512.300" width="23.600" height="6.400" rx="2.300"/><rect x="982.300" y="520.400" width="11" height="4.800" rx="2"/><path d="M968.300,518 H982.300 V529.700 H968.300 L973.800,523.850z"/><rect x="966" y="532" width="19.400" height="6.400" rx="2.300"/><path d="M982.500,542.300 q16.500,-1 16.900,-17" stroke="#b3b3b3" stroke-width="3.600" fill="none" stroke-linecap="round"/><path d="M992.600,531.300 l6.800,-6.900 l6.800,6.900" stroke="#b3b3b3" stroke-width="3.400" fill="none" stroke-linecap="round" stroke-linejoin="round"/></g><g fill="#fdfdfe"><rect x="985" y="506" width="8" height="2.300"/><rect x="985" y="514.300" width="8" height="2.300"/></g>
<g fill="#b3b3b3"><rect x="1761" y="504" width="25" height="7" rx="2.5"/><rect x="1761" y="513.5" width="25" height="7" rx="2.5"/><rect x="1761" y="523" width="10" height="4" rx="2"/><path d="M1770,524 V541 M1763,534 l7,7.5 l7,-7.5" stroke="#b3b3b3" stroke-width="3.5" fill="none"/><rect x="1783" y="525" width="18" height="19"/><rect x="1780" y="519" width="24" height="4.5"/><rect x="1787" y="515.5" width="10" height="4"/></g><g fill="#fdfdfe"><rect x="1764" y="506.3" width="8" height="2.4"/><rect x="1764" y="515.8" width="8" height="2.4"/><rect x="1787" y="529" width="3" height="12"/><rect x="1794" y="529" width="3" height="12"/></g>
<path d="M354.7,564.6 l8.1,-8.6 l7,4 l7.5,-11" stroke="#6f9bc8" stroke-width="3.2" fill="none" stroke-linecap="round" stroke-linejoin="round"/>
<path d="M354.7,648.6 l8.1,-8.6 l7,4 l7.5,-11" stroke="#6f9bc8" stroke-width="3.2" fill="none" stroke-linecap="round" stroke-linejoin="round"/>
<path d="M1148.7,564.6 l8.1,-8.6 l7,4 l7.5,-11" stroke="#6f9bc8" stroke-width="3.2" fill="none" stroke-linecap="round" stroke-linejoin="round"/>
<path d="M1148.7,648.6 l8.1,-8.6 l7,4 l7.5,-11" stroke="#6f9bc8" stroke-width="3.2" fill="none" stroke-linecap="round" stroke-linejoin="round"/>
<path d="M1942.7,564.6 l8.1,-8.6 l7,4 l7.5,-11" stroke="#6f9bc8" stroke-width="3.2" fill="none" stroke-linecap="round" stroke-linejoin="round"/>
<path d="M1942.7,648.6 l8.1,-8.6 l7,4 l7.5,-11" stroke="#6f9bc8" stroke-width="3.2" fill="none" stroke-linecap="round" stroke-linejoin="round"/>
<path d="M2583,540 l7.5,-8 l6.5,3.6 l8,-11" stroke="#fff" stroke-width="3.6" fill="none" stroke-linecap="round" stroke-linejoin="round"/>
<path d="M2583,716 l7.5,-8 l6.5,3.6 l8,-11" stroke="#fff" stroke-width="3.6" fill="none" stroke-linecap="round" stroke-linejoin="round"/>
<g><path d="M2472.15,472.15 C2462.37,470.65 2460.71,474.80 2462.78,483.08 C2465.68,494.68 2474.80,504.62 2487.64,505.62" fill="none" stroke="#b8923a" stroke-width="3.800"/><path d="M2527.99,472.15 C2537.76,470.65 2539.42,474.80 2537.35,483.08 C2534.45,494.68 2525.34,504.62 2512.49,505.62" fill="none" stroke="#b8923a" stroke-width="3.800"/><path d="M2472.15,462.20 L2473.14,477.28 L2477.28,489.71 L2486.40,502.97 L2493.02,510.42 L2495.10,518.71 L2493.02,526.99 L2486.40,533.62 L2480.60,538.18 L2519.95,538.18 L2513.74,533.62 L2507.11,526.99 L2505.45,518.71 L2507.11,510.42 L2513.74,502.97 L2522.85,489.71 L2526.99,477.28 L2527.99,462.20Z" fill="#ecc73c" stroke="#ecc73c" stroke-width="0.800" stroke-linejoin="round"/><path d="M2527.99,462.20 L2526.99,477.28 L2522.85,489.71 L2513.74,502.97 L2507.11,510.42 L2505.45,518.71 L2507.11,526.99 L2513.74,533.62 L2519.95,538.18 L2511.25,536.93 L2502.97,527.82 L2499.24,514.57 L2504.62,506.28 L2512.91,493.85 L2516.22,477.28 L2516.64,462.20Z" fill="#e1ba3b"/><path d="M2472.15,462.20 L2473.14,477.28 L2477.28,489.71 L2486.40,502.97 L2493.02,510.42 L2495.10,518.71 L2493.02,526.99 L2486.40,533.62 L2480.60,538.18 L2489.71,535.28 L2498.00,526.99 L2500.89,518.71 L2498.00,511.25 L2489.71,498.00 L2483.91,481.43 L2481.43,462.20Z" fill="#f6e494"/><rect x="2469.99" y="459.88" width="59.90" height="2.400" fill="#dfb32e"/><rect x="2480.200" y="538.200" width="19.900" height="4" fill="#c9ac6a"/><rect x="2500.100" y="538.200" width="19.900" height="4" fill="#b5923c"/><rect x="2476" y="542.100" width="22" height="4" fill="#b8924c"/><rect x="2498" y="542.100" width="26.100" height="4" fill="#a36d17"/><path d="M2500.07,475.45 L2502.48,481.84 L2509.29,482.16 L2503.97,486.42 L2505.77,493.00 L2500.07,489.25 L2494.36,493.00 L2496.17,486.42 L2490.84,482.16 L2497.66,481.84Z" fill="#b8923a" stroke="#fff" stroke-width="5" paint-order="stroke" stroke-linejoin="miter"/></g>
<g><rect x="2504.200" y="636.300" width="11.600" height="9.500" fill="#c1686e" stroke="#b5283a" stroke-width="1.300"/><rect x="2504.200" y="698.300" width="11.600" height="9.500" fill="#c1686e" stroke="#b5283a" stroke-width="1.300"/><path d="M2526.83,653.08 C2525.61,652.50 2522.27,650.29 2519.54,649.60 C2516.80,648.91 2513.46,648.57 2510.42,648.94 C2507.38,649.31 2503.66,650.04 2501.31,651.84 C2498.96,653.63 2496.48,657.16 2496.34,659.71 C2496.20,662.26 2498.13,665.16 2500.48,667.17 C2502.83,669.17 2507.11,670.20 2510.42,671.72 C2513.74,673.24 2518.02,674.28 2520.36,676.28 C2522.71,678.28 2524.65,681.18 2524.51,683.74 C2524.37,686.29 2521.88,689.88 2519.54,691.61 C2517.19,693.33 2513.60,693.89 2510.42,694.09 C2507.25,694.30 2503.77,693.75 2500.48,692.85 C2497.19,691.95 2492.33,689.40 2490.70,688.71" fill="none" stroke="#b5283a" stroke-width="14.200"/><path d="M2526.83,653.08 C2525.61,652.50 2522.27,650.29 2519.54,649.60 C2516.80,648.91 2513.46,648.57 2510.42,648.94 C2507.38,649.31 2503.66,650.04 2501.31,651.84 C2498.96,653.63 2496.48,657.16 2496.34,659.71 C2496.20,662.26 2498.13,665.16 2500.48,667.17 C2502.83,669.17 2507.11,670.20 2510.42,671.72 C2513.74,673.24 2518.02,674.28 2520.36,676.28 C2522.71,678.28 2524.65,681.18 2524.51,683.74 C2524.37,686.29 2521.88,689.88 2519.54,691.61 C2517.19,693.33 2513.60,693.89 2510.42,694.09 C2507.25,694.30 2503.77,693.75 2500.48,692.85 C2497.19,691.95 2492.33,689.40 2490.70,688.71" fill="none" stroke="#c1686e" stroke-width="11.600"/><rect x="2504.900" y="640" width="10.200" height="8" fill="#c1686e"/><rect x="2504.900" y="696" width="10.200" height="8" fill="#c1686e"/><path d="M2474,657.500 V687 M2462.400,675 L2474,687.800 L2485.600,675" stroke="#b5283a" stroke-width="6.800" fill="none" stroke-linecap="round" stroke-linejoin="round"/><path d="M2474,657.500 V687 M2462.400,675 L2474,687.800 L2485.600,675" stroke="#c1686e" stroke-width="4.400" fill="none" stroke-linecap="round" stroke-linejoin="round"/></g>
</svg>
<div class="a" style="left:2644px;top:561px;width:200px;height:11px;border:2px solid #c9d7ea;background:#5cc8a0"></div>
<div class="a" style="left:2644px;top:738px;width:200px;height:11px;border:2px solid #c9d7ea;background:#f1f4fa"></div>
<div class="a" style="left:2646px;top:740px;width:4px;height:7px;background:#e26a55"></div>

<!-- CHART -->
<div class="a" style="left:76px;top:760px;width:3080px;height:601px;background:#fefefe"></div>
<svg style="left:0;top:0" width="3232" height="1818" viewBox="0 0 3232 1818">
<rect x="2617" y="853" width="361" height="424" fill="#f8f9fb"/>
<path d="M457,853V1277M817,853V1277M1177,853V1277M1537,853V1277M1897,853V1277M2257,853V1277M2617,853V1277M97,853H2978M97,994.3H2978M97,1135.7H2978" stroke="#e3e6ea" stroke-width="2" fill="none"/>
<path d="M97,853V1296 M97,1277H2978 M2978,853V1296M457,1277V1296M817,1277V1296M1177,1277V1296M1537,1277V1296M1897,1277V1296M2257,1277V1296M2617,1277V1296M2978,853H2998M2978,994.3H2998M2978,1135.7H2998M2978,1277H2998" stroke="#a9b3c2" stroke-width="2" fill="none"/>
<path d="M277,1080.8 C421.0,1080.8 493.0,994.6 637,994.6 C781.0,994.6 853.0,916.6 997,916.6 C1141.0,916.6 1213.0,1067 1357,1067 C1501.0,1067 1573.0,1192.7 1717,1192.7 C1861.0,1192.7 1933.0,958 2077,958 C2221.0,958 2293.0,1090.8 2437,1090.8 C2581.0,1090.8 2653.0,882.6 2797,882.6" stroke="#56aa8b" stroke-width="3.2" fill="none"/>
<path d="M277,1231.7 C421.0,1231.7 493.0,1206 637,1206 C781.0,1206 853.0,1277 997,1277 C1141.0,1277 1213.0,1207 1357,1207 C1501.0,1207 1573.0,1050 1717,1050 C1861.0,1050 1933.0,1241.8 2077,1241.8 C2221.0,1241.8 2293.0,1169.4 2437,1169.4 C2581.0,1169.4 2653.0,1276.4 2797,1276.4" stroke="#a82532" stroke-width="3.2" fill="none"/>
<path d="M2719,807H2750" stroke="#b0232f" stroke-width="3"/><path d="M2938,807H2969" stroke="#4aa685" stroke-width="3"/>
<path d="M105.500,823.600 L114,812 L122.600,818.900 L132.700,804.200" stroke="#2b4462" stroke-width="4.600" fill="none" stroke-linecap="round" stroke-linejoin="round"/>
</svg>
<div class="a" style="left:107px;top:1291px;width:51px;height:48px;border:2px solid #8fb2dc;border-radius:5px;background:linear-gradient(#d3e0f1,#bfd1ea)"></div>
<svg style="left:0;top:0" width="3232" height="1818" viewBox="0 0 3232 1818"><path d="M137,1305 L127,1315 L137,1325" stroke="#000" stroke-width="3" fill="none"/></svg>

<div class="t" style="left:82.94px;top:16.71px;font-size:29.64px;color:#fff;transform:scaleX(1.0899);-webkit-text-stroke:0.4px #fff;">Pipeliner</div>
<div class="t" style="left:1568.74px;top:17.40px;font-size:27.29px;color:#fff;transform:scaleX(0.9900);-webkit-text-stroke:0.9px #fff;">Insights</div>
<div class="t" style="left:44.20px;top:97.88px;font-size:26.73px;color:#10294a;transform:scaleX(1.0207);-webkit-text-stroke:0.5px #10294a;">Insights</div>
<div class="t" style="left:206.14px;top:97.88px;font-size:26.73px;color:#10294a;transform:scaleX(1.0069);-webkit-text-stroke:0.5px #10294a;">Indicators</div>
<div class="t" style="left:390.87px;top:97.88px;font-size:26.73px;color:#10294a;transform:scaleX(0.9706);-webkit-text-stroke:0.5px #10294a;">Conversions</div>
<div class="t" style="left:602.20px;top:97.88px;font-size:26.73px;color:#10294a;transform:scaleX(0.9628);-webkit-text-stroke:0.5px #10294a;">Life Cycle</div>
<div class="t" style="left:83.11px;top:172.76px;font-size:27.7px;color:#2a5d9f;transform:scaleX(1.0197);-webkit-text-stroke:0.5px #2a5d9f;">Users Insights</div>
<div class="t" style="left:2775.87px;top:164.33px;font-size:20.91px;color:#10294a;transform:scaleX(1.0581);-webkit-text-stroke:0.6px #10294a;">My</div>
<div class="t" style="left:2776.63px;top:187.67px;font-size:21.33px;color:#3b5678;transform:scaleX(1.0336);-webkit-text-stroke:0.5px #3b5678;">All pipelines</div>
<div class="t" style="left:338.51px;top:314.93px;font-size:39.61px;color:#10294a;transform:scaleX(1.0057);-webkit-text-stroke:0.6px #10294a;">Wilson, Matthew</div>
<div class="t" style="left:2711.24px;top:317.36px;font-size:40.64px;color:#4fa98a;transform:scaleX(0.9700);-webkit-text-stroke:0.4px #4fa98a;">$422,190.00</div>
<div class="t" style="left:2999.55px;top:317.49px;font-size:39.66px;color:#fff;transform:scaleX(0.8639);-webkit-text-stroke:1.0px #fff;">100%</div>
<div class="t" style="left:156.75px;top:552.03px;font-size:61.73px;color:#4a8733;transform:scaleX(0.9816);-webkit-text-stroke:0.5px #4a8733;">62</div>
<div class="t" style="left:128.55px;top:616.83px;font-size:22.91px;color:#5f7791;transform:scaleX(0.9343);-webkit-text-stroke:0.4px #5f7791;">100% vs. 1st</div>
<div class="t" style="left:329.55px;top:470.88px;font-size:34.49px;color:#4a8733;transform:scaleX(0.9729);-webkit-text-stroke:0.3px #4a8733;">Created</div>
<div class="t" style="left:403.76px;top:533.03px;font-size:38.55px;color:#1a3f73;transform:scaleX(1.0087);-webkit-text-stroke:0.5px #1a3f73;">33</div>
<div class="t" style="left:403.75px;top:575.88px;font-size:23.55px;color:#4d6485;transform:scaleX(1.0000);-webkit-text-stroke:0.45px #4d6485;">Created Leads</div>
<div class="t" style="left:403.22px;top:617.59px;font-size:38.13px;color:#1a3f73;transform:scaleX(1.0265);-webkit-text-stroke:0.5px #1a3f73;">29</div>
<div class="t" style="left:403.70px;top:660.28px;font-size:23.55px;color:#4d6485;transform:scaleX(1.0187);-webkit-text-stroke:0.45px #4d6485;">Created Opportunities</div>
<div class="t" style="left:951.27px;top:552.03px;font-size:61.73px;color:#2f79c9;transform:scaleX(0.9986);-webkit-text-stroke:0.5px #2f79c9;">45</div>
<div class="t" style="left:963.71px;top:616.83px;font-size:22.91px;color:#5f7791;transform:scaleX(0.9131);-webkit-text-stroke:0.4px #5f7791;">72%</div>
<div class="t" style="left:1123.28px;top:470.88px;font-size:34.49px;color:#2f7fc8;transform:scaleX(0.9893);-webkit-text-stroke:0.3px #2f7fc8;">Converted</div>
<div class="t" style="left:1197.43px;top:533.03px;font-size:38.55px;color:#1a3f73;transform:scaleX(1.0462);-webkit-text-stroke:0.5px #1a3f73;">28</div>
<div class="t" style="left:1198.37px;top:575.88px;font-size:23.55px;color:#4d6485;transform:scaleX(1.0066);-webkit-text-stroke:0.45px #4d6485;">Qualified Leads</div>
<div class="t" style="left:1198.51px;top:617.59px;font-size:38.13px;color:#1a3f73;transform:scaleX(1.0448);-webkit-text-stroke:0.5px #1a3f73;">17</div>
<div class="t" style="left:1198.25px;top:660.28px;font-size:23.55px;color:#4d6485;transform:scaleX(1.0215);-webkit-text-stroke:0.45px #4d6485;">Won Opportunities</div>
<div class="t" style="left:1761.61px;top:552.03px;font-size:61.73px;color:#ee5a45;transform:scaleX(0.9776);-webkit-text-stroke:0.5px #ee5a45;">5</div>
<div class="t" style="left:1722.58px;top:616.83px;font-size:22.91px;color:#5f7791;transform:scaleX(0.9312);-webkit-text-stroke:0.4px #5f7791;">10% vs. 1st</div>
<div class="t" style="left:1916.79px;top:470.88px;font-size:34.49px;color:#e0601f;transform:scaleX(1.0270);-webkit-text-stroke:0.3px #e0601f;">Lost</div>
<div class="t" style="left:1993.08px;top:533.03px;font-size:38.55px;color:#1a3f73;transform:scaleX(0.9916);-webkit-text-stroke:0.5px #1a3f73;">5</div>
<div class="t" style="left:1991.56px;top:575.88px;font-size:23.55px;color:#4d6485;transform:scaleX(1.0266);-webkit-text-stroke:0.45px #4d6485;">Lost Leads</div>
<div class="t" style="left:1993.41px;top:617.59px;font-size:38.13px;color:#1a3f73;transform:scaleX(0.9845);-webkit-text-stroke:0.5px #1a3f73;">0</div>
<div class="t" style="left:1991.50px;top:660.28px;font-size:23.55px;color:#4d6485;transform:scaleX(1.0348);-webkit-text-stroke:0.45px #4d6485;">Lost Opportunities</div>
<div class="t" style="left:2570.61px;top:455.89px;font-size:33.66px;color:#3a8264;transform:scaleX(1.0131);-webkit-text-stroke:0.4px #3a8264;">Won Amount</div>
<div class="t" style="left:2645.32px;top:503.94px;font-size:37.01px;color:#1a3f73;transform:scaleX(1.0105);-webkit-text-stroke:0.5px #1a3f73;">$422,190.00</div>
<div class="t" style="left:2852.15px;top:553.74px;font-size:21.37px;color:#6b7f99;transform:scaleX(0.9749);-webkit-text-stroke:0.4px #6b7f99;">100%</div>
<div class="t" style="left:2569.18px;top:632.13px;font-size:33.38px;color:#c5242e;transform:scaleX(1.0493);-webkit-text-stroke:0.4px #c5242e;">Lost Amount</div>
<div class="t" style="left:2645.31px;top:679.50px;font-size:37.29px;color:#1a3f73;transform:scaleX(1.0041);-webkit-text-stroke:0.5px #1a3f73;">$0.00</div>
<div class="t" style="left:2852.68px;top:729.89px;font-size:20.95px;color:#6b7f99;transform:scaleX(1.0030);-webkit-text-stroke:0.4px #6b7f99;">0% vs. All</div>
<div class="t" style="left:148.66px;top:795.11px;font-size:31.16px;color:#2b4462;transform:scaleX(1.0514);-webkit-text-stroke:0.3px #2b4462;">History</div>
<div class="t" style="left:2758.50px;top:794.96px;font-size:22.16px;color:#b0232f;transform:scaleX(1.1223);-webkit-text-stroke:0.3px #b0232f;">Lost Amount</div>
<div class="t" style="left:2980.09px;top:794.96px;font-size:22.16px;color:#4aa685;transform:scaleX(1.0884);-webkit-text-stroke:0.3px #4aa685;">Won Amount</div>
<div class="t" style="left:3008.65px;top:844.30px;font-size:23.18px;color:#8594a8;transform:scaleX(0.9728);font-weight:700;">$450,000.00</div>
<div class="t" style="left:3008.65px;top:984.20px;font-size:23.18px;color:#8594a8;transform:scaleX(0.9728);font-weight:700;">$300,000.00</div>
<div class="t" style="left:3008.65px;top:1125.30px;font-size:23.18px;color:#8594a8;transform:scaleX(0.9728);font-weight:700;">$150,000.00</div>
<div class="t" style="left:3008.64px;top:1266.48px;font-size:23.32px;color:#8594a8;transform:scaleX(0.9748);font-weight:700;">$0.00</div>
<div class="t" style="left:251.50px;top:1300.53px;font-size:22.91px;color:#8594a8;transform:scaleX(1.0284);font-weight:700;">2011</div>
<div class="t" style="left:611.54px;top:1300.53px;font-size:22.91px;color:#8594a8;transform:scaleX(1.0079);font-weight:700;">2012</div>
<div class="t" style="left:971.55px;top:1300.53px;font-size:22.91px;color:#8594a8;transform:scaleX(1.0060);font-weight:700;">2013</div>
<div class="t" style="left:1331.55px;top:1300.53px;font-size:22.91px;color:#8594a8;transform:scaleX(0.9901);font-weight:700;">2014</div>
<div class="t" style="left:1691.53px;top:1300.53px;font-size:22.91px;color:#8594a8;transform:scaleX(0.9998);font-weight:700;">2015</div>
<div class="t" style="left:2051.55px;top:1300.53px;font-size:22.91px;color:#8594a8;transform:scaleX(1.0060);font-weight:700;">2016</div>
<div class="t" style="left:2411.54px;top:1300.53px;font-size:22.91px;color:#8594a8;transform:scaleX(1.0109);font-weight:700;">2017</div>
<div class="t" style="left:2771.53px;top:1300.53px;font-size:22.91px;color:#8594a8;transform:scaleX(1.0026);font-weight:700;">2018</div>
<div class="t" style="left:38.66px;top:1598.91px;font-size:31.99px;color:#1a3456;transform:scaleX(1.0812);-webkit-text-stroke:0.4px #1a3456;">Highlights</div>
<div class="t" style="left:195.61px;top:1766.17px;font-size:28.39px;color:#fff;transform:scaleX(0.9986);-webkit-text-stroke:0.8px #fff;">Navigator</div>
<div class="t" style="left:394.79px;top:1766.17px;font-size:28.39px;color:#fff;transform:scaleX(1.0050);-webkit-text-stroke:0.8px #fff;">Leads</div>
<div class="t" style="left:550.71px;top:1766.17px;font-size:28.39px;color:#fff;transform:scaleX(1.0105);-webkit-text-stroke:0.8px #fff;">Opportunities</div>
<div class="t" style="left:800.50px;top:1766.17px;font-size:28.39px;color:#fff;transform:scaleX(1.0071);-webkit-text-stroke:0.8px #fff;">Accounts</div>
<div class="t" style="left:997.63px;top:1766.17px;font-size:28.39px;color:#fff;transform:scaleX(1.0107);-webkit-text-stroke:0.8px #fff;">Contacts</div>
<div class="t" style="left:1191.40px;top:1766.17px;font-size:28.39px;color:#fff;transform:scaleX(1.0248);-webkit-text-stroke:0.8px #fff;">Activities</div>
<div class="t" style="left:1383.61px;top:1766.17px;font-size:28.39px;color:#fff;transform:scaleX(0.9864);-webkit-text-stroke:0.8px #fff;">Feeds</div>
<div class="t" style="left:1537.98px;top:1766.17px;font-size:28.39px;color:#fff;transform:scaleX(1.0073);-webkit-text-stroke:0.8px #fff;">Reports</div>
<div class="t" style="left:1716.35px;top:1766.17px;font-size:28.39px;color:#fff;transform:scaleX(1.0289);-webkit-text-stroke:0.8px #fff;">Insights</div>
<div class="t" style="left:1897.40px;top:1766.17px;font-size:28.39px;color:#fff;transform:scaleX(0.9830);-webkit-text-stroke:0.8px #fff;">Archive</div>
</body></html>
